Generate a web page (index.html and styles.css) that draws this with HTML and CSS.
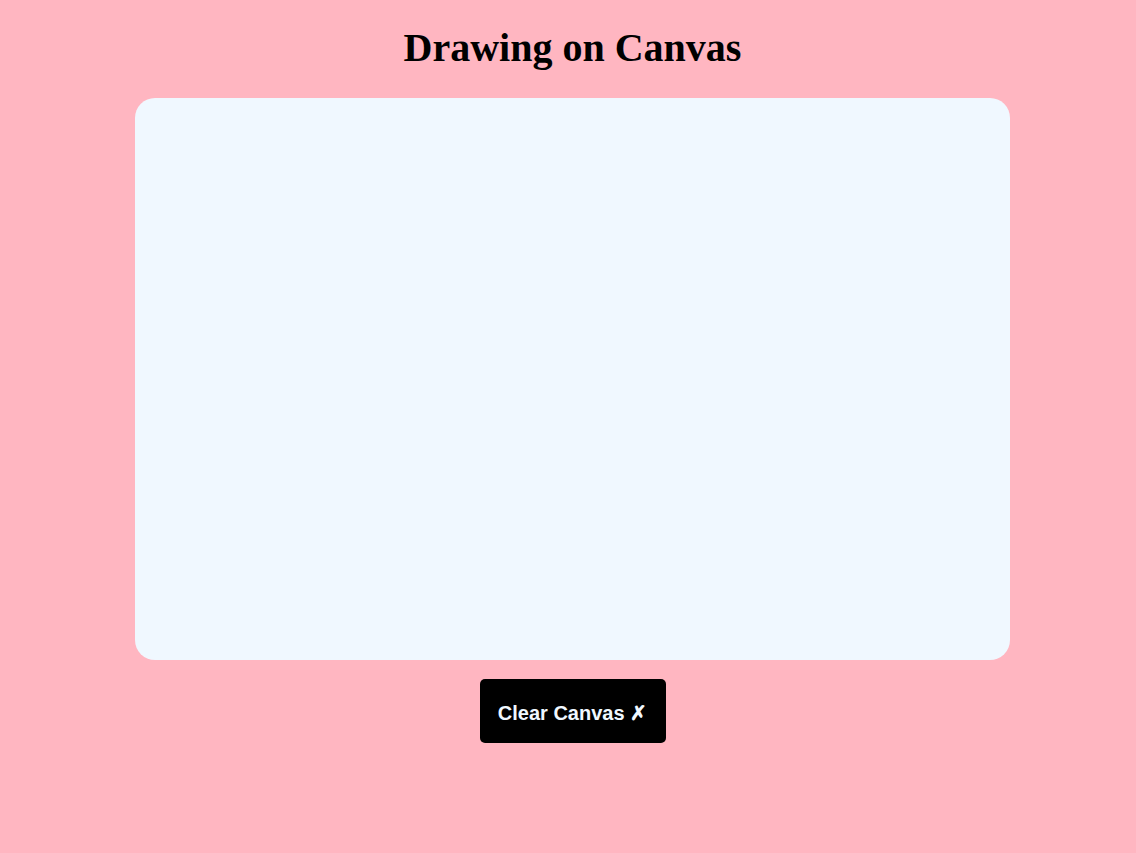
FILE: index.html
```html
<!DOCTYPE html>
<html>
<head>
<meta charset="utf-8">
<title>Drawing on Canvas</title>
<link rel="stylesheet" href="styles.css">
</head>
<body>
<main class="page">
  <h1 class="title">Drawing on Canvas</h1>
  <div class="canvas"></div>
  <button class="clear-btn">Clear Canvas ✗</button>
</main>
</body>
</html>
```

FILE: styles.css
```css
html, body {
  margin: 0;
  padding: 0;
  background: #ffb6c1;
}
.page {
  display: flex;
  flex-direction: column;
  align-items: center;
  padding-left: 9px;
}
.title {
  font-family: "Liberation Serif", "Times New Roman", serif;
  font-weight: bold;
  font-size: 40px;
  line-height: 48px;
  margin: 24px 0 26px;
  color: #000;
}
.canvas {
  width: 875px;
  height: 562px;
  background: #f0f8ff;
  border-radius: 20px;
}
.clear-btn {
  margin-top: 19px;
  width: 186px;
  height: 64px;
  background: #000;
  color: #f0f8ff;
  border: none;
  border-radius: 5px;
  font-family: "Liberation Sans", Arial, sans-serif;
  font-weight: bold;
  font-size: 20px;
  line-height: 24px;
  padding: 3px 0 0;
}
```
